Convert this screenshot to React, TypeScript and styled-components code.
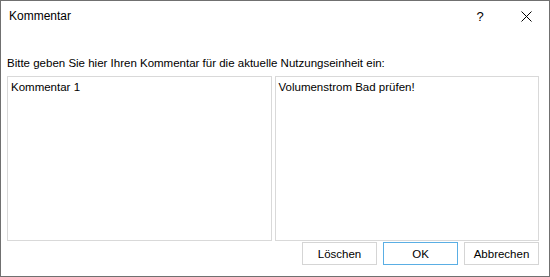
import React from "react";
import styled, { createGlobalStyle } from "styled-components";

const GlobalStyle = createGlobalStyle`
  html, body {
    margin: 0;
    padding: 0;
    background: #ffffff;
  }
  body {
    font-family: "Segoe UI", "Liberation Sans", "Noto Sans", sans-serif;
    font-size: 11.5px;
    color: #000000;
  }
`;

const Window = styled.div`
  width: 550px;
  height: 277px;
  box-sizing: border-box;
  border: 1px solid #707070;
  background: #ffffff;
  display: flex;
  flex-direction: column;
`;

const TitleBar = styled.div`
  height: 30px;
  display: flex;
  align-items: center;
  padding-left: 8px;
`;

const Title = styled.div`
  flex: 1;
  font-size: 12px;
  line-height: 16px;
`;

const CaptionButton = styled.div`
  width: 46px;
  height: 30px;
  display: flex;
  align-items: center;
  justify-content: center;
  font-size: 13px;
`;

const Body = styled.div`
  flex: 1;
  display: flex;
  flex-direction: column;
  padding: 0 10px 11px 6px;
`;

const Prompt = styled.div`
  margin-top: 24px;
  line-height: 16px;
  white-space: nowrap;
`;

const Fields = styled.div`
  margin-top: 5px;
  display: grid;
  grid-template-columns: 1fr 1fr;
  column-gap: 3px;
  height: 165px;
`;

const Field = styled.div`
  border: 1px solid #d9d9d9;
  padding: 2px 3px;
  line-height: 16px;
`;

const ButtonRow = styled.div`
  margin-top: 1px;
  display: flex;
  justify-content: flex-end;
  gap: 6px;
`;

const DialogButton = styled.div<{ focused?: boolean }>`
  width: 75px;
  height: 23px;
  box-sizing: border-box;
  border: 1px solid ${({ focused }) => (focused ? "#5aaee4" : "#d5d5d5")};
  display: flex;
  align-items: center;
  justify-content: center;
`;

const CloseIcon = () => (
  <svg width="11" height="11" viewBox="0 0 11 11">
    <path d="M0.5 0.5 L10.5 10.5 M10.5 0.5 L0.5 10.5" stroke="#000" strokeWidth="1" />
  </svg>
);

export default function App() {
  return (
    <>
      <GlobalStyle />
      <Window>
        <TitleBar>
          <Title>Kommentar</Title>
          <CaptionButton>?</CaptionButton>
          <CaptionButton>
            <CloseIcon />
          </CaptionButton>
        </TitleBar>
        <Body>
          <Prompt>Bitte geben Sie hier Ihren Kommentar für die aktuelle Nutzungseinheit ein:</Prompt>
          <Fields>
            <Field>Kommentar 1</Field>
            <Field>Volumenstrom Bad prüfen!</Field>
          </Fields>
          <ButtonRow>
            <DialogButton>Löschen</DialogButton>
            <DialogButton focused>OK</DialogButton>
            <DialogButton>Abbrechen</DialogButton>
          </ButtonRow>
        </Body>
      </Window>
    </>
  );
}
